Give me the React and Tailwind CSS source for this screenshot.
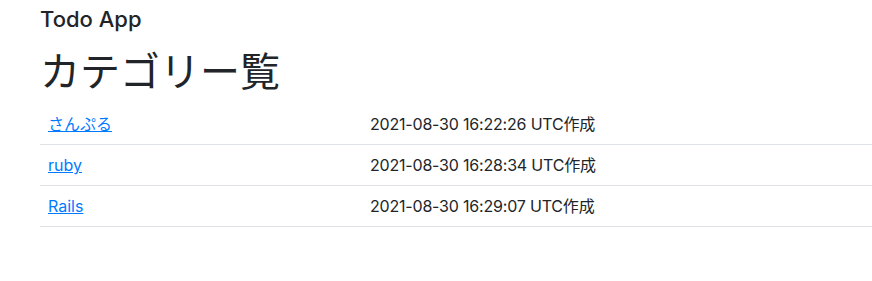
const categories = [
  { name: "さんぷる", createdAt: "2021-08-30 16:22:26 UTC" },
  { name: "ruby", createdAt: "2021-08-30 16:28:34 UTC" },
  { name: "Rails", createdAt: "2021-08-30 16:29:07 UTC" },
];

export default function App() {
  return (
    <div
      className="min-h-screen bg-white pl-[40px] text-[#212529]"
      style={{ fontFamily: '"Inter", "Noto Sans CJK JP", sans-serif' }}
    >
      {/* Navbar */}
      <div className="pt-[4px] text-[22px] font-medium leading-[30px]">
        Todo App
      </div>

      <h1 className="mt-[14px] mb-[8px] text-[40px] font-normal leading-[48px]">
        カテゴリー覧
      </h1>

      <table className="w-full border-collapse text-[16px] leading-[24px]">
        <tbody>
          {categories.map((c) => (
            <tr key={c.name} className="border-b border-[#dee2e6]">
              <td className="w-[322px] p-[8px]">
                <a href="#" className="text-[#007bff] underline">
                  {c.name}
                </a>
              </td>
              <td className="p-[8px] tracking-[-0.012em]">{c.createdAt}作成</td>
            </tr>
          ))}
        </tbody>
      </table>
    </div>
  );
}
